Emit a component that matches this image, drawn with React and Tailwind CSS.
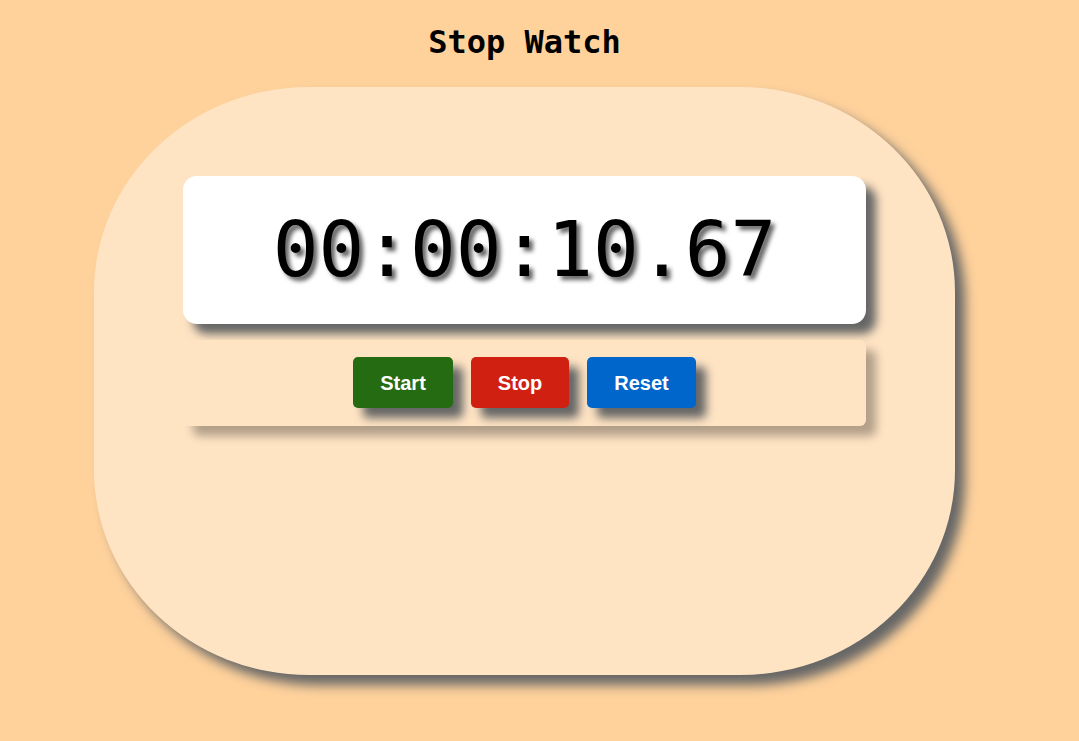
import { useState } from 'react';

const Stopwatch = () => {
  const [time] = useState('00:00:10.67');

  const btn =
    "h-[51px] rounded-[5px] px-[27px] font-['Liberation_Sans',Arial,sans-serif] text-[20px] font-bold text-white shadow-[10px_10px_10px_#666]";

  return (
    <div className="min-h-screen w-full bg-[#ffd29c] pr-[30px]">
      <h1 className="pt-[22px] text-center font-['DejaVu_Sans_Mono','Liberation_Mono',monospace] text-[32px] font-bold leading-[40px] text-black">
        Stop Watch
      </h1>

      {/* Card */}
      <div className="mx-auto mt-[25px] h-[588px] w-[861px] rounded-[215px/205px] bg-[#ffe4c4] px-[89px] pt-[89px] shadow-[10px_10px_12px_#666]">
        {/* Display */}
        <div className="flex h-[148px] items-center justify-center rounded-[14px] bg-white shadow-[10px_10px_10px_#666]">
          <span className="font-['DejaVu_Sans_Mono','Liberation_Mono',monospace] text-[76px] leading-none text-black [text-shadow:4px_4px_4px_#666]">
            {time}
          </span>
        </div>

        {/* Controls */}
        <div className="mt-[16px] flex justify-center gap-[18px] rounded-[6px] bg-[#ffe4c4] pb-[18px] pt-[17px] shadow-[10px_10px_10px_rgba(0,0,0,0.3)]">
          <button className={`${btn} bg-[#246b12]`}>Start</button>
          <button className={`${btn} bg-[#d02012]`}>Stop</button>
          <button className={`${btn} bg-[#0066cc]`}>Reset</button>
        </div>
      </div>
    </div>
  );
};

export default function App() {
  return <Stopwatch />;
}
